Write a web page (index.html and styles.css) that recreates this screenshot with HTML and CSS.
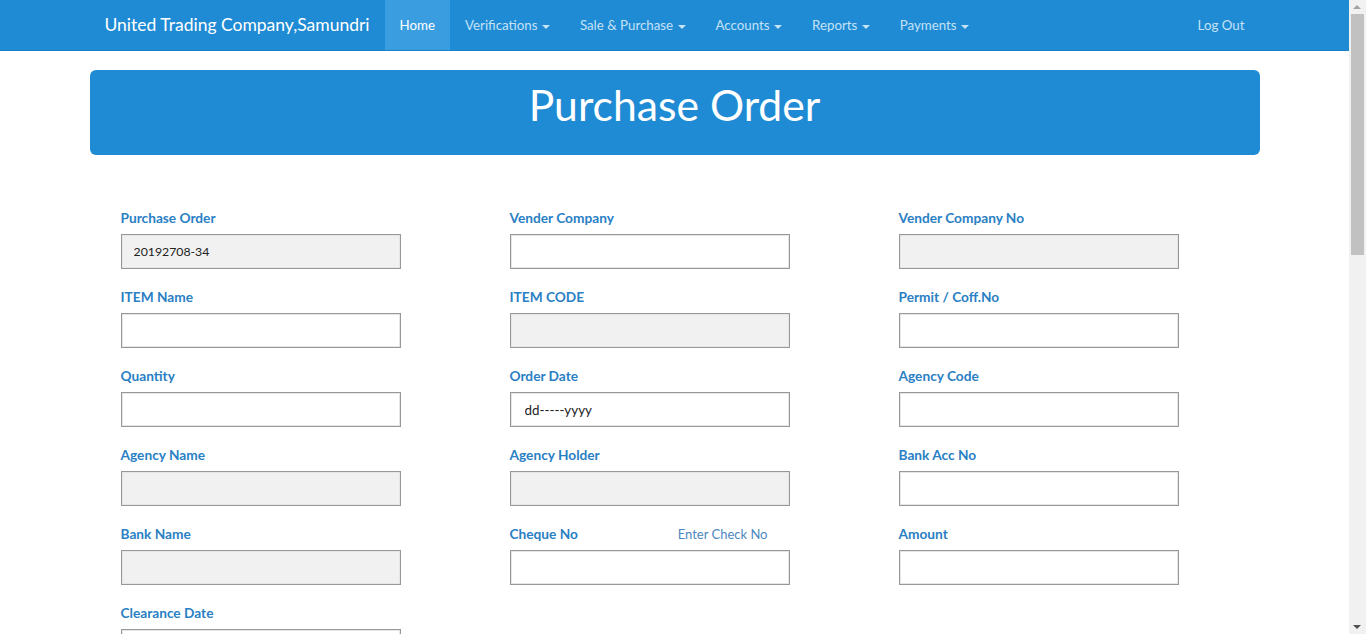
FILE: index.html
```html
<!DOCTYPE html>
<html lang="en">
<head>
<meta charset="utf-8">
<title>Purchase Order</title>
<link rel="stylesheet" href="styles.css">
</head>
<body>
<div class="page">
<nav class="navbar">
  <div class="nav-inner">
    <a class="brand" href="#">United Trading Company,Samundri</a>
    <ul class="nav">
      <li class="active"><a href="#">Home</a></li>
      <li><a href="#">Verifications <span class="caret"></span></a></li>
      <li><a href="#">Sale &amp; Purchase <span class="caret"></span></a></li>
      <li><a href="#">Accounts <span class="caret"></span></a></li>
      <li><a href="#">Reports <span class="caret"></span></a></li>
      <li><a href="#">Payments <span class="caret"></span></a></li>
    </ul>
    <ul class="nav nav-right">
      <li><a href="#">Log Out</a></li>
    </ul>
  </div>
</nav>
<main class="container">
  <div class="banner"><h1>Purchase Order</h1></div>
  <form class="form-grid">
    <div class="field"><label>Purchase Order</label><input class="ro" type="text" value="20192708-34" readonly></div>
    <div class="field"><label>Vender Company</label><input type="text"></div>
    <div class="field"><label>Vender Company No</label><input class="ro" type="text" readonly></div>

    <div class="field"><label>ITEM Name</label><input type="text"></div>
    <div class="field"><label>ITEM CODE</label><input class="ro" type="text" readonly></div>
    <div class="field"><label>Permit / Coff.No</label><input type="text"></div>

    <div class="field"><label>Quantity</label><input type="text"></div>
    <div class="field"><label>Order Date</label><input class="date" type="text" value="dd-----yyyy"></div>
    <div class="field"><label>Agency Code</label><input type="text"></div>

    <div class="field"><label>Agency Name</label><input class="ro" type="text" readonly></div>
    <div class="field"><label>Agency Holder</label><input class="ro" type="text" readonly></div>
    <div class="field"><label>Bank Acc No</label><input type="text"></div>

    <div class="field"><label>Bank Name</label><input class="ro" type="text" readonly></div>
    <div class="field"><div class="label-row"><label>Cheque No</label><span class="hint">Enter Check No</span></div><input type="text"></div>
    <div class="field"><label>Amount</label><input type="text"></div>

    <div class="field"><label>Clearance Date</label><input type="text"></div>
  </form>
</main>
</div>
<div class="scrollbar" aria-hidden="true">
  <span class="arrow-up"></span>
  <span class="thumb"></span>
  <span class="arrow-down"></span>
</div>
</body>
</html>
```
FILE: styles.css
```css
* { box-sizing: border-box; }
html, body { margin: 0; padding: 0; }
body {
  font-family: Lato, "Noto Sans", "Liberation Sans", sans-serif;
  font-size: 14px;
  color: #333;
  background: #fff;
}
a { text-decoration: none; }

.page { margin-right: 17px; }

.navbar {
  background: #1f8bd4;
  border-bottom: 1px solid #1a7fc4;
  height: 51px;
}
.nav-inner {
  width: 1170px;
  margin: 0 auto;
  padding: 0 15px;
  display: flex;
  align-items: stretch;
  height: 50px;
}
.brand {
  color: #fff;
  font-size: 17.5px;
  line-height: 50px;
  padding-right: 15px;
  white-space: nowrap;
}
.nav {
  list-style: none;
  margin: 0;
  padding: 0;
  display: flex;
}
.nav li a {
  display: block;
  padding: 0 15px;
  line-height: 50px;
  color: #c5e2f6;
  font-size: 13.3px;
}
.nav li.active a {
  background: #3a9de0;
  color: #fff;
}
.nav-right { margin-left: auto; }
.nav-right li a { padding-right: 0; }
.caret {
  display: inline-block;
  width: 0;
  height: 0;
  margin-left: 1px;
  vertical-align: middle;
  border-top: 4px solid #c5e2f6;
  border-left: 4px solid transparent;
  border-right: 4px solid transparent;
}

.container {
  width: 1170px;
  margin: 0 auto;
  padding-top: 19px;
  min-height: 1530px;
}
.banner {
  background: #1f8bd4;
  border-radius: 6px;
  height: 85px;
  display: flex;
  align-items: center;
  justify-content: center;
}
.banner h1 {
  margin: 0 0 14px;
  color: #fff;
  font-weight: 400;
  font-size: 42.7px;
  line-height: 1.1;
}

.form-grid {
  display: grid;
  grid-template-columns: repeat(3, 280px);
  column-gap: 109px;
  row-gap: 19px;
  padding: 54px 0 0 31px;
}
.field { display: flex; flex-direction: column; }
.field label {
  display: block;
  color: #2a80c4;
  font-weight: 700;
  font-size: 13.7px;
  line-height: 18px;
  margin-bottom: 7px;
}
.label-row { display: flex; justify-content: space-between; align-items: flex-start; }
.hint {
  color: #4d87bf;
  font-size: 13px;
  line-height: 18px;
  margin-right: 22px;
}
.field input {
  width: 280px;
  height: 35px;
  border: 1px solid #989898;
  box-shadow: inset 0 0 0 1px #e6e6e6;
  background: #fff;
  font-family: inherit;
  font-size: 12.3px;
  color: #222;
  padding: 0 12px;
  outline: none;
}
.field input.ro { background: #f1f1f1; }
.field input.date { padding-left: 14px; font-size: 13.4px; }

.scrollbar {
  position: fixed;
  top: 0;
  right: 0;
  width: 17px;
  height: 100%;
  background: #f1f1f1;
}
.thumb {
  position: absolute;
  top: 14px;
  left: 2px;
  width: 13px;
  height: 241px;
  background: #c1c1c1;
}
.arrow-up, .arrow-down {
  position: absolute;
  left: 4px;
  width: 0;
  height: 0;
  border-left: 4.5px solid transparent;
  border-right: 4.5px solid transparent;
}
.arrow-up {
  top: 5px;
  border-bottom: 4px solid #a3a3a3;
}
.arrow-down {
  bottom: 5px;
  border-top: 4px solid #505050;
}
```
